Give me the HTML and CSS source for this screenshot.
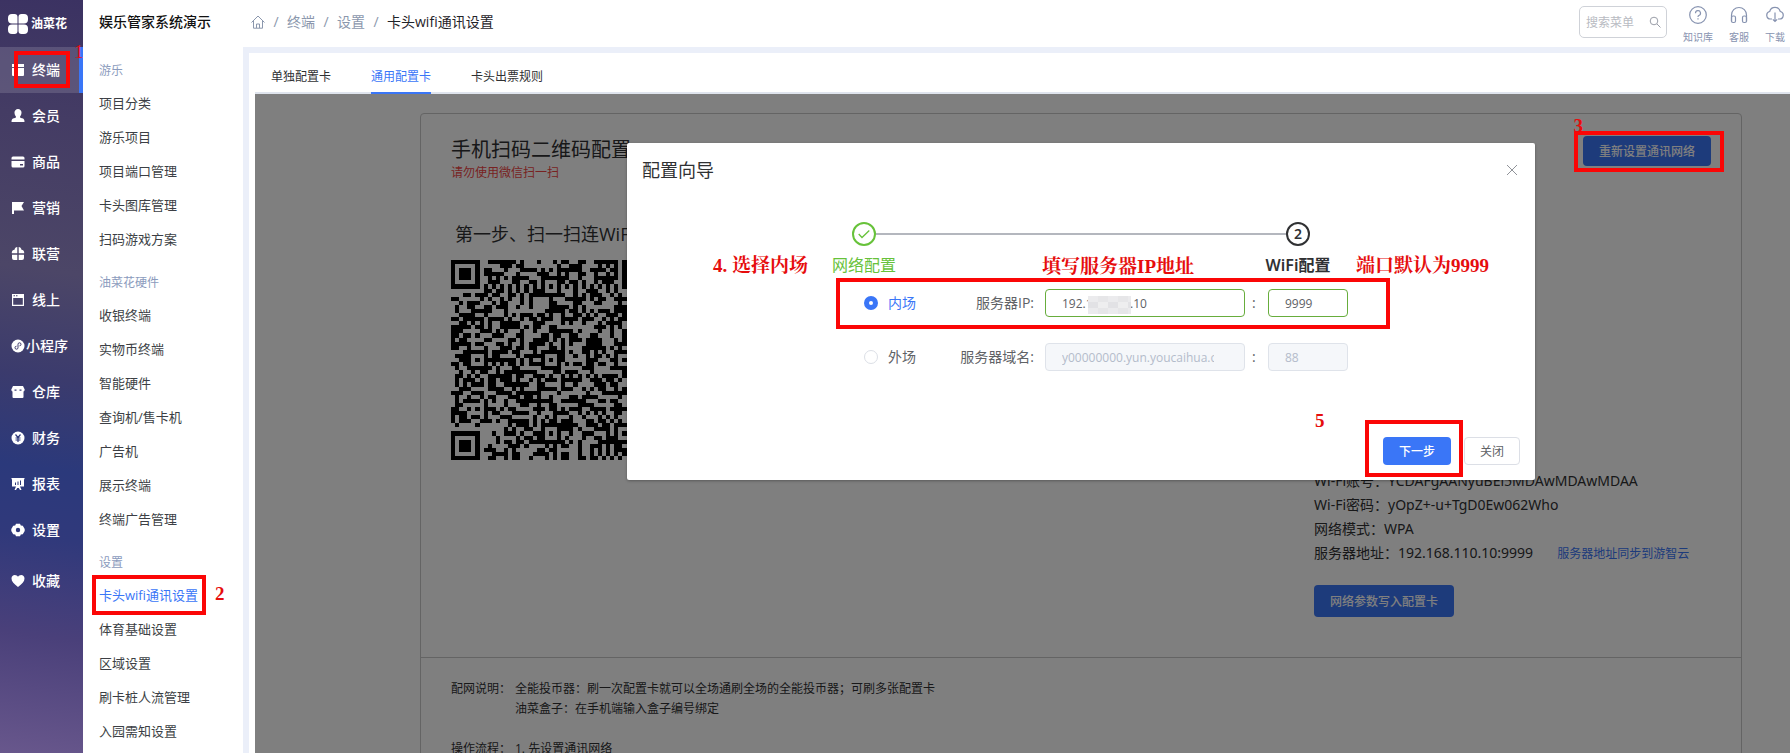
FILE: index.html
```html
<!DOCTYPE html>
<html lang="zh-CN">
<head>
<meta charset="utf-8">
<title>卡头wifi通讯设置</title>
<link rel="stylesheet" href="styles.css">
</head>
<body>
<div class="app">
  <nav class="rail" aria-label="主导航">
    <a class="brand" href="#">
      <svg width="20" height="20" viewBox="0 0 20 20" fill="#fff"><path d="M4 0h2.500a3 3 0 0 1 3 3v6.500H4A4 4 0 0 1 0 5.500V4a4 4 0 0 1 4-4zM13.500 0H16a4 4 0 0 1 4 4v1.500a4 4 0 0 1-4 4h-5.500V3a3 3 0 0 1 3-3zM4 10.500h5.500V17a3 3 0 0 1-3 3H4a4 4 0 0 1-4-4v-1.500a4 4 0 0 1 4-4zM10.500 10.500H16a4 4 0 0 1 4 4V16a4 4 0 0 1-4 4h-2.500a3 3 0 0 1-3-3z"/></svg>
      <span>油菜花</span>
    </a>
    <a class="rail-item active" href="#"><svg viewBox="0 0 14 14"><path d="M1 1h12v3H1zM1 5h5v8H2a1 1 0 0 1-1-1zM7 5h6v7a1 1 0 0 1-1 1H7z"/></svg><span>终端</span></a>
    <a class="rail-item" href="#"><svg viewBox="0 0 14 14"><path d="M7 0a3.500 3.500 0 0 1 3.500 3.800C10.400 6 9.500 7 9 7.700c0 1 .7 1.300 2 1.600 1.600.4 2.500 1 2.500 3.700H.5C.5 10.300 1.400 9.700 3 9.300c1.300-.3 2-.6 2-1.600C4.500 7 3.600 6 3.500 3.800A3.500 3.500 0 0 1 7 0z"/></svg><span>会员</span></a>
    <a class="rail-item" href="#"><svg viewBox="0 0 14 14"><path d="M2 1.500h10A1.500 1.500 0 0 1 13.500 3v1.500H.5V3A1.500 1.500 0 0 1 2 1.500zM.5 6h13v5a1.500 1.500 0 0 1-1.500 1.500H2A1.500 1.500 0 0 1 .5 11zM9 9v1.500h3V9z" fill-rule="evenodd"/></svg><span>商品</span></a>
    <a class="rail-item" href="#"><svg viewBox="0 0 14 14"><path d="M1 1h12l-2.500 4L13 9.500H3V13H1z"/></svg><span>营销</span></a>
    <a class="rail-item" href="#"><svg viewBox="0 0 14 14"><path d="M6.300 2v4.300H.8C.6 4 2 3 3.500 2.800 3.600 1 5 .2 6.300 0zM7.700 0c1.300.2 2.700 1 2.800 2.800C12 3 13.400 4 13.200 6.300H7.700zM1 7.700h5.300V13H3a2 2 0 0 1-2-2zM7.700 7.700H13V11a2 2 0 0 1-2 2H7.700z"/></svg><span>联营</span></a>
    <a class="rail-item" href="#"><svg viewBox="0 0 14 14"><path d="M1 1h12v12H1zM2.200 5v6.800h9.600V5zM2.500 2.300v1h1.500v-1zM5 2.300v1h1.500v-1z" fill-rule="evenodd"/></svg><span>线上</span></a>
    <a class="rail-item tight" href="#"><svg viewBox="0 0 14 14"><circle cx="7" cy="7" r="6.500"/><path d="M5.500 7.200a1.500 1.500 0 1 0 1.500 1.500V5.300a1.500 1.500 0 1 1 1.500 1.500" fill="none" stroke="#403c6e"/></svg><span>小程序</span></a>
    <a class="rail-item" href="#"><svg viewBox="0 0 14 14"><path d="M2 1h10l1.700 3.500c0 1.200-.5 1.700-1.200 1.900V12a1 1 0 0 1-1 1h-9a1 1 0 0 1-1-1V6.400C.8 6.200.3 5.700.3 4.500zM3.500 4.500v1.200h2V4.500zM8.500 4.500v1.200h2V4.500z" fill-rule="evenodd"/></svg><span>仓库</span></a>
    <a class="rail-item" href="#"><svg viewBox="0 0 14 14"><circle cx="7" cy="7" r="6.500"/><path d="M4.500 3.500 7 6.500l2.500-3M4.500 7h5M4.500 9h5M7 6.500V11" fill="none" stroke="#2f397a" stroke-width="1.200"/></svg><span>财务</span></a>
    <a class="rail-item" href="#"><svg viewBox="0 0 14 14"><path d="M.5 1h13v1.200H13v7.300H9l1.500 3.500H9L7.800 11H6.200L5 13H3.500L5 9.500H1V2.200H.5zM4 5.500V8h1V5.500zM6.500 4.500V8h1V4.500zM9 3.500V8h1V3.500z" fill-rule="evenodd"/></svg><span>报表</span></a>
    <a class="rail-item" href="#"><svg viewBox="0 0 14 14"><path d="M5 .8h4l.8 1.800 2 .2L13.700 6v2l-1.900 3.200-2 .2-.8 1.800H5l-.8-1.800-2-.2L.3 8V6l1.900-3.200 2-.2zM7 4.800a2.200 2.200 0 1 0 0 4.400 2.200 2.200 0 0 0 0-4.400z" fill-rule="evenodd"/></svg><span>设置</span></a>
    <a class="rail-item last" href="#"><svg viewBox="0 0 14 14"><path d="M7 13C3 10 .5 7.500.5 4.500.5 2.300 2 1 3.800 1 5.200 1 6.300 1.700 7 2.800 7.700 1.700 8.800 1 10.200 1c1.800 0 3.300 1.300 3.300 3.500C13.500 7.500 11 10 7 13z"/></svg><span>收藏</span></a>
    <span class="mark-box box-rail"></span>
    <span class="mark-text note-1">1</span>
  </nav>

  <aside class="menu">
    <h1 class="menu-title">娱乐管家系统演示</h1>
    <section class="group">
      <h2>游乐</h2>
      <a href="#">项目分类</a><a href="#">游乐项目</a><a href="#">项目端口管理</a><a href="#">卡头图库管理</a><a href="#">扫码游戏方案</a>
    </section>
    <section class="group">
      <h2>油菜花硬件</h2>
      <a href="#">收银终端</a><a href="#">实物币终端</a><a href="#">智能硬件</a><a href="#">查询机/售卡机</a><a href="#">广告机</a><a href="#">展示终端</a><a href="#">终端广告管理</a>
    </section>
    <section class="group">
      <h2>设置</h2>
      <a class="current" href="#">卡头wifi通讯设置<span class="mark-box box-menu"></span><span class="mark-text note-2">2</span></a><a href="#">体育基础设置</a><a href="#">区域设置</a><a href="#">刷卡桩人流管理</a><a href="#">入园需知设置</a>
    </section>
  </aside>

  <div class="page">
    <header class="topbar">
      <nav class="crumbs" aria-label="面包屑">
        <a href="#" aria-label="首页"><svg width="14" height="14" viewBox="0 0 14 14" fill="none" stroke="currentColor"><path d="M.5 7.500 7 1l6.500 6.500M2.500 6v7.200h9V6M5.500 13V9h3v4"/></svg></a>
        <i>/</i><a href="#">终端</a><i>/</i><a href="#">设置</a><i>/</i><b>卡头wifi通讯设置</b>
      </nav>
      <div class="tools">
        <label class="search"><input type="text" placeholder="搜索菜单" aria-label="搜索菜单"><svg width="12" height="12" viewBox="0 0 12 12" fill="none" stroke="currentColor"><circle cx="5" cy="5" r="3.800"/><path d="m8 8 3.500 3.500"/></svg></label>
        <a class="tool" href="#"><svg viewBox="0 0 18 18"><circle cx="9" cy="9" r="8.300"/><path d="M6.500 7.200A2.500 2.500 0 1 1 9.800 9.500c-.6.300-.8.600-.8 1.500M9 12.300v1.200"/></svg><span>知识库</span></a>
        <a class="tool" href="#"><svg viewBox="0 0 18 18"><path d="M1.500 15.500V9a7.500 7.500 0 0 1 15 0v6.500"/><rect x="1.500" y="10" width="4" height="6.500" rx="1.500"/><rect x="12.500" y="10" width="4" height="6.500" rx="1.500"/></svg><span>客服</span></a>
        <a class="tool" href="#"><svg viewBox="0 0 18 18"><path d="M6 13H4.500a3.800 3.800 0 0 1-.8-7.500 5.500 5.500 0 0 1 10.600 0 3.800 3.800 0 0 1-.8 7.500H12M9 6.500v9M6.800 13.300 9 15.500l2.200-2.200"/></svg><span>下载</span></a>
      </div>
    </header>

    <main class="body">
      <div class="tabs" role="tablist">
        <button class="tab" role="tab">单独配置卡</button>
        <button class="tab active" role="tab" aria-selected="true">通用配置卡</button>
        <button class="tab" role="tab">卡头出票规则</button>
      </div>

      <div class="stage">
        <section class="card">
          <div class="card-main">
            <div class="card-head">
              <div>
                <h2>手机扫码二维码配置</h2>
                <p class="warn">请勿使用微信扫一扫</p>
              </div>
              <button class="btn-solid">重新设置通讯网络</button>
            </div>
            <h3>第一步、扫一扫连WiFi</h3>
            <div class="qr-row"><svg class="qr" id="qr" viewBox="0 0 49 49" shape-rendering="crispEdges" role="img" aria-label="WiFi 二维码"></svg></div>
            <div class="info">
              <p>Wi-Fi账号：YCDAFgAANyuBEi5MDAwMDAwMDAA</p>
              <p>Wi-Fi密码：yOpZ+-u+TgD0Ew062Who</p>
              <p>网络模式：WPA</p>
              <p>服务器地址：192.168.110.10:9999<a href="#">服务器地址同步到游智云</a></p>
              <button class="btn-solid tall">网络参数写入配置卡</button>
            </div>
          </div>
          <dl class="notes">
            <dt>配网说明：</dt>
            <dd>全能投币器：刷一次配置卡就可以全场通刷全场的全能投币器；可刷多张配置卡<br>油菜盒子：在手机端输入盒子编号绑定</dd>
            <dt>操作流程：</dt>
            <dd>1. 先设置通讯网络</dd>
          </dl>
        </section>

        <div class="overlay">
          <form class="dialog" role="dialog" aria-label="配置向导">
            <div class="dialog-head">
              <h2>配置向导</h2>
              <button type="button" class="close" aria-label="关闭"><svg width="12" height="12" viewBox="0 0 12 12" fill="none" stroke="currentColor"><path d="m1 1 10 10M11 1 1 11"/></svg></button>
            </div>
            <ol class="steps">
              <li class="done"><span class="dot"><svg width="12" height="12" viewBox="0 0 12 12" fill="none" stroke="currentColor" stroke-width="1.300"><path d="M.7 6 4 9.500 11.300 2.500"/></svg></span><span class="step-label">网络配置</span></li>
              <li class="now"><span class="dot">2</span><span class="step-label">WiFi配置</span></li>
            </ol>
            <div class="fields">
              <label class="choice on"><input type="radio" name="site" checked>内场</label>
              <label class="name" for="ip">服务器IP:</label>
              <span class="host"><input id="ip" type="text" value="192.168.110.10"><span class="mosaic"></span></span>
              <span class="colon">:</span>
              <input type="text" value="9999" aria-label="内场端口">
              <label class="choice"><input type="radio" name="site">外场</label>
              <label class="name" for="domain">服务器域名:</label>
              <span class="host"><input id="domain" type="text" value="y00000000.yun.youcaihua.com" disabled></span>
              <span class="colon">:</span>
              <input type="text" value="88" aria-label="外场端口" disabled>
            </div>
            <div class="dialog-foot">
              <button type="button" class="next">下一步</button>
              <button type="button" class="cancel">关闭</button>
            </div>
            <span class="mark-box box-fields"></span>
            <span class="mark-box box-next"></span>
            <span class="mark-text note-4">4. 选择内场</span>
            <span class="mark-text note-ip">填写服务器IP地址</span>
            <span class="mark-text note-port">端口默认为9999</span>
            <span class="mark-text note-5">5</span>
          </form>
        </div>
        <span class="mark-box box-reset"></span>
        <span class="mark-text note-3">3</span>
      </div>
    </main>
  </div>
</div>
<script src="qr.js"></script>
</body>
</html>
```

FILE: qr.js
```js
// Draws a 49-module QR symbol: data modules, then finder and alignment patterns.
const N = 49;
let seed = 20117;
const next = () => (seed = (seed * 1103515245 + 12345) % 2147483648) / 2147483648;
const grid = Array.from({ length: N }, () => Array.from({ length: N }, () => next() < 0.52));

function square(cx, cy, r, on) {
  for (let y = cy - r; y <= cy + r; y++)
    for (let x = cx - r; x <= cx + r; x++)
      if (grid[y] && x >= 0 && x < N) grid[y][x] = on;
}
for (let i = 0; i < N; i++) grid[6][i] = grid[i][6] = i % 2 === 0;
for (const [x, y] of [[3, 3], [45, 3], [3, 45]]) {
  square(x, y, 4, false);
  square(x, y, 3, true);
  square(x, y, 2, false);
  square(x, y, 1, true);
}
for (const [x, y] of [[24, 6], [6, 24], [24, 24], [42, 24], [24, 42], [42, 42]]) {
  square(x, y, 2, true);
  square(x, y, 1, false);
  square(x, y, 0, true);
}
let d = "";
grid.forEach((row, y) => row.forEach((on, x) => { if (on) d += `M${x} ${y}h1v1h-1z`; }));
const path = document.createElementNS("http://www.w3.org/2000/svg", "path");
path.setAttribute("d", d);
document.getElementById("qr").append(path);
```

FILE: styles.css
```css
* { box-sizing: border-box; }
body, h1, h2, h3, p, ol, dl, dd { margin: 0; padding: 0; }
body, button, input {
  font-family: "Open Sans", "Noto Sans CJK SC", sans-serif;
}
body { background: #fff; color: #303133; font-size: 14px; line-height: 20px; }
h1, h2, h3, b, i { font-weight: 400; font-style: normal; }
a { color: inherit; text-decoration: none; }
button { padding: 0; border: 0; background: none; font-size: 12px; cursor: pointer; }

.app { display: flex; height: 100vh; overflow: hidden; }

/* icon rail */
.rail {
  position: relative;
  flex: 0 0 83px;
  color: #fff;
  background: linear-gradient(188deg, #3b3262 0%, #443c64 16%, #4c4667 36%, #3b3b6d 50%, #2b397b 62%, #30397b 71%, #4a407a 84%, #68578c 100%);
}
.brand { display: flex; align-items: center; gap: 3px; height: 47px; padding: 0 8px; font-size: 12px; font-weight: 700; }
.brand span { white-space: nowrap; }
.brand svg { flex: none; }
.rail-item { display: flex; align-items: center; gap: 7px; height: 46px; padding-left: 11px; font-weight: 500; white-space: nowrap; }
.rail-item svg { width: 14px; height: 14px; flex: none; fill: #fff; }
.rail-item.active { background: rgba(255, 255, 255, .14); border-right: 4px solid #3a76f7; }
.rail-item.tight { gap: 1px; }
.rail-item.last { margin-top: 5px; }

/* section menu */
.menu { flex: 0 0 160px; background: #fff; }
.menu-title { height: 56px; padding: 12px 0 0 16px; color: #111; font-size: 14px; font-weight: 500; line-height: 20px; }
.group { margin-bottom: 12px; }
.group h2 { padding-left: 16px; color: #8b9bbd; font-size: 12px; line-height: 30px; }
.group a { display: block; position: relative; padding-left: 16px; font-size: 13px; line-height: 34px; color: #3c3f45; }
.group .current { color: #3a76f7; }

.page { flex: 1; min-width: 0; display: flex; flex-direction: column; background: #ebeff9; }

/* top bar */
.topbar { display: flex; justify-content: space-between; height: 47px; padding: 0 5px 0 8px; background: #fff; }
.crumbs { display: flex; align-items: center; gap: 8px; height: 44px; color: #8b97ad; }
.crumbs a { display: flex; }
.crumbs i { width: 6px; text-align: center; }
.crumbs b { color: #1f2329; }
.tools { display: flex; gap: 16px; padding-top: 6px; color: #8793b0; }
.search { display: flex; align-items: center; width: 88px; height: 32px; padding: 0 5px 0 6px; border: 1px solid #cfd2d8; border-radius: 5px; color: #9a9ea8; }
.search input { flex: 1; min-width: 0; padding: 0; border: 0; outline: 0; font-size: 12px; }
.search input::placeholder { color: #b8bbc2; }
.tool { display: flex; flex-direction: column; align-items: center; gap: 6px; font-size: 10px; line-height: 14px; }
.tool svg { width: 18px; height: 18px; fill: none; stroke: currentColor; stroke-width: 1.200; }

/* content */
.body { flex: 1; min-height: 0; display: flex; flex-direction: column; margin: 6px 0 0 6px; padding-left: 6px; background: #fff; }
.tabs { display: flex; gap: 40px; height: 41px; padding: 0 16px; border-bottom: 2px solid #dfe4ed; }
.tab { height: 41px; padding-top: 6px; border-bottom: 2px solid transparent; color: #303133; }
.tab.active { color: #3a76f7; border-bottom-color: #3a76f7; }
.stage { position: relative; flex: 1; min-height: 0; overflow: hidden; padding: 19px 48px 0 165px; }

.card { border: 1px solid #c8c8c8; border-radius: 4px; height: 720px; }
.card-main { padding: 22px 30px 40px 30px; border-bottom: 1px solid #c8c8c8; }
.card-head { display: flex; justify-content: space-between; align-items: flex-start; }
.card h2 { font-size: 20px; line-height: 28px; }
.warn { color: #f04545; font-size: 12px; line-height: 18px; }
.card h3 { margin-top: 38px; padding-left: 4px; font-size: 18px; line-height: 28px; }
.qr-row { margin-top: 12px; height: 200px; }
.qr { width: 200px; height: 200px; }
.btn-solid { height: 30px; padding: 0 16px; border-radius: 4px; background: #3a76f7; color: #fff; font-weight: 500; }
.btn-solid.tall { display: block; height: 32px; margin-top: 19px; }
.info { width: 397px; margin: 9px 0 0 auto; font-family: "Noto Sans", "Noto Sans CJK SC", sans-serif; line-height: 24px; white-space: nowrap; }
.info a { margin-left: 24px; color: #3a76f7; font-size: 12px; }
.notes { display: grid; grid-template-columns: 60px 1fr; gap: 20px 4px; padding: 21px 30px; font-size: 12px; line-height: 20px; }

/* wizard dialog */
.overlay { position: absolute; inset: 0; padding: 49px 48px 0 165px; background: rgba(0, 0, 0, .5); }
.dialog { position: relative; display: flex; flex-direction: column; width: 908px; max-width: 100%; height: 337px; margin: 0 auto; padding: 15px; border-radius: 2px; background: #fff; box-shadow: 0 1px 3px rgba(0, 0, 0, .3); }
.dialog-head { display: flex; justify-content: space-between; align-items: center; }
.dialog-head h2 { font-size: 18px; line-height: 24px; }
.close { display: flex; width: 14px; color: #909399; }
.steps { display: flex; justify-content: space-between; position: relative; width: 502px; margin: 40px 0 0 188px; list-style: none; }
.steps::before { content: ""; position: absolute; top: 11px; left: 34px; right: 34px; height: 2px; background: #b4b7be; }
.steps li { display: flex; flex-direction: column; align-items: center; position: relative; width: 68px; gap: 7px; font-size: 16px; line-height: 24px; white-space: nowrap; }
.dot { display: flex; align-items: center; justify-content: center; width: 24px; height: 24px; border: 2px solid; border-radius: 50%; background: #fff; font-size: 14px; }
.done { color: #67c23a; }
.now { color: #303133; font-family: "Noto Sans", "Noto Sans CJK SC", sans-serif; font-weight: 600; }
.fields { display: grid; grid-template-columns: 80px 101px 200px 1fr 80px; row-gap: 26px; align-items: center; width: 484px; margin: 12px 0 0 222px; color: #606266; }
.choice { display: flex; align-items: center; gap: 10px; }
.choice.on { color: #3a76f7; }
.choice input { appearance: none; width: 14px; height: 14px; margin: 0; border: 1px solid #dcdfe6; border-radius: 50%; background: #fff; }
.choice input:checked { border: 5px solid #3a76f7; }
.name { padding-right: 11px; text-align: right; white-space: nowrap; }
.host { position: relative; display: flex; }
.fields input[type="text"] { width: 100%; height: 28px; padding: 0 30px 0 16px; border: 1px solid #67ad3c; border-radius: 4px; background: #fff; color: #606266; font-size: 12px; }
.fields input[type="text"]:disabled { border-color: #dfe3ea; background: #f5f7fa; color: #b4bccb; }
.mosaic { position: absolute; left: 43px; top: 7px; width: 43px; height: 18px; background: conic-gradient(#e6e6e8 25%, #eeeeef 0 50%, #e2e2e5 0 75%, #ebebed 0) 0 0 / 20px 12px; }
.colon { padding-left: 7px; }
.dialog-foot { display: flex; justify-content: flex-end; gap: 13px; margin-top: auto; }
.dialog-foot button { height: 28px; border-radius: 4px; }
.next { width: 68px; background: #3a76f7; color: #fff; font-weight: 500; }
.cancel { width: 56px; border: 1px solid #dcdfe6; color: #606266; }

/* red guide marks laid over the interface */
.mark-box { position: absolute; border: 4px solid #fb0606; pointer-events: none; }
.mark-text { position: absolute; color: #e60d0d; font: 700 19px/24px "Liberation Serif", "Noto Serif CJK SC", "Noto Sans CJK SC", serif; white-space: nowrap; pointer-events: none; }
.box-rail { left: 14px; top: 51px; width: 56px; height: 37px; }
.box-menu { left: 9px; top: -3px; width: 114px; height: 40px; }
.box-reset { right: 66px; top: 37px; width: 150px; height: 41px; }
.box-fields { left: 209px; top: 135px; width: 554px; height: 51px; }
.box-next { right: 72px; bottom: 3px; width: 98px; height: 57px; }
.note-1 { left: 74px; top: 40px; font-weight: 400; }
.group .note-2 { left: 132px; top: 4px; }
.note-3 { right: 207px; top: 20px; }
.note-4 { left: 86px; top: 111px; }
.note-ip { left: 415px; top: 112px; }
.note-port { left: 729px; top: 111px; }
.note-5 { left: 688px; top: 266px; }
```
